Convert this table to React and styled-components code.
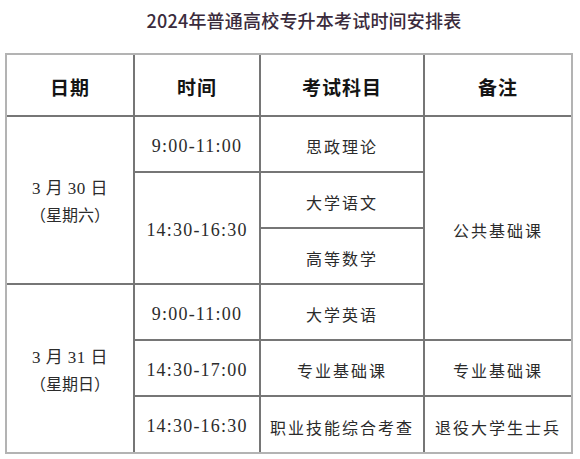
import React from "react";
import styled, { createGlobalStyle } from "styled-components";

const Global = createGlobalStyle`
  * { box-sizing: border-box; }
  html, body { margin: 0; padding: 0; background: #ffffff; }
  body { font-family: "Liberation Serif", "Noto Sans CJK SC", serif; }
`;

const Page = styled.div`
  width: 580px;
  height: 459px;
  padding: 9px 0 0 5px;
  background: #fff;
  overflow: hidden;
`;

const Title = styled.h1`
  margin: 0 0 22px 0;
  padding-left: 30px;
  width: 568px;
  height: 22px;
  line-height: 22px;
  text-align: center;
  font-family: "Noto Sans CJK SC", sans-serif;
  font-size: 18px;
  font-weight: 500;
  color: #3a2b3c;
  letter-spacing: 0.2px;
`;

const Table = styled.table`
  width: 568px;
  table-layout: fixed;
  border-collapse: separate;
  border-spacing: 0;
  border: 2px solid #b3b3b3;
`;

const HeadRow = styled.tr`
  height: 62px;
`;

const Row = styled.tr`
  height: ${(p) => (p.$last ? 55 : 56)}px;
`;

const HeadCell = styled.th`
  padding: 2px 0 0 0;
  text-align: center;
  vertical-align: middle;
  font-family: "Noto Sans CJK SC", sans-serif;
  font-size: 19px;
  font-weight: 700;
  color: #141414;
  letter-spacing: 1px;
  border-bottom: 2px solid #767676;
  border-right: ${(p) => (p.$end ? "none" : "2px solid #767676")};
`;

const Cell = styled.td`
  padding: 4px 0 0 0;
  text-align: center;
  vertical-align: middle;
  font-family: ${(p) =>
    p.$time
      ? `"Liberation Serif", serif`
      : `"Liberation Serif", "Noto Sans CJK SC", serif`};
  font-size: ${(p) => (p.$time ? 18 : 16)}px;
  letter-spacing: ${(p) => (p.$time ? 1.2 : 2)}px;
  font-weight: 400;
  color: #2b2b2b;
  white-space: nowrap;
  border-bottom: ${(p) => (p.$bottom ? "none" : "2px solid #767676")};
  border-right: ${(p) => (p.$end ? "none" : "2px solid #767676")};
`;

const DateText = styled.div`
  font-size: 17px;
  line-height: 27px;
  letter-spacing: 0.5px;
  color: #2b2b2b;
`;

const DateSub = styled.span`
  display: block;
  font-size: 16px;
  letter-spacing: 0;
`;

export default function App() {
  return (
    <>
      <Global />
      <Page>
        <Title>2024年普通高校专升本考试时间安排表</Title>
        <Table>
          <colgroup>
            <col style={{ width: 128 }} />
            <col style={{ width: 126 }} />
            <col style={{ width: 164 }} />
            <col style={{ width: 146 }} />
          </colgroup>
          <thead>
            <HeadRow>
              <HeadCell>日期</HeadCell>
              <HeadCell>时间</HeadCell>
              <HeadCell>考试科目</HeadCell>
              <HeadCell $end>备注</HeadCell>
            </HeadRow>
          </thead>
          <tbody>
            <Row>
              <Cell rowSpan={3}>
                <DateText>
                  3 月 30 日
                  <DateSub>（星期六）</DateSub>
                </DateText>
              </Cell>
              <Cell $time>9:00-11:00</Cell>
              <Cell>思政理论</Cell>
              <Cell rowSpan={4} $end>公共基础课</Cell>
            </Row>
            <Row>
              <Cell $time rowSpan={2}>14:30-16:30</Cell>
              <Cell>大学语文</Cell>
            </Row>
            <Row>
              <Cell>高等数学</Cell>
            </Row>
            <Row>
              <Cell rowSpan={3} $bottom>
                <DateText>
                  3 月 31 日
                  <DateSub>（星期日）</DateSub>
                </DateText>
              </Cell>
              <Cell $time>9:00-11:00</Cell>
              <Cell>大学英语</Cell>
            </Row>
            <Row>
              <Cell $time>14:30-17:00</Cell>
              <Cell>专业基础课</Cell>
              <Cell $end>专业基础课</Cell>
            </Row>
            <Row $last>
              <Cell $time $bottom>14:30-16:30</Cell>
              <Cell $bottom>职业技能综合考查</Cell>
              <Cell $bottom $end>退役大学生士兵</Cell>
            </Row>
          </tbody>
        </Table>
      </Page>
    </>
  );
}
